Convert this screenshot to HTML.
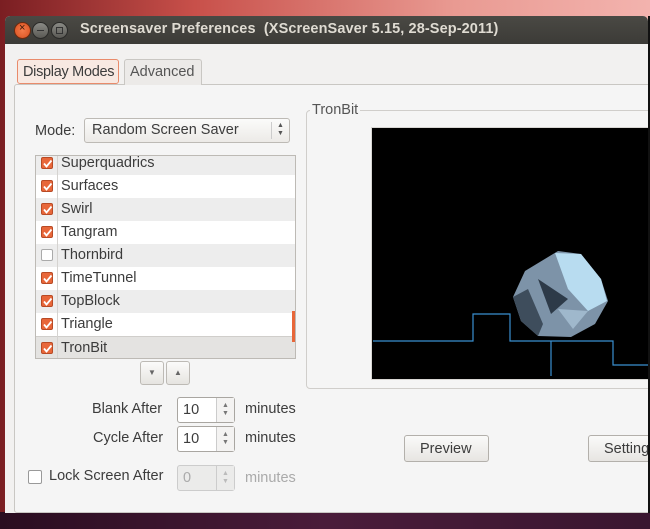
<!DOCTYPE html>
<html><head><style>
*{box-sizing:border-box;margin:0;padding:0}
body{width:650px;height:529px;overflow:hidden;position:relative;background:#000;font-family:"Liberation Sans","DejaVu Sans",sans-serif;font-size:14px;color:#3c3c3c}
.a{position:absolute;white-space:nowrap}
.desk{left:0;top:0;width:650px;height:529px;background:linear-gradient(90deg,#7a1e22 0%,#c8504a 30%,#e99a92 70%,#f3b3ae 100%)}
.bottom{left:0;top:512px;width:650px;height:17px;background:linear-gradient(90deg,#2a0d20,#4a1c3a 50%,#3a1630)}
.win{left:5px;top:16px;width:643px;height:497px;background:#f2f1f0;border-radius:5px 5px 0 0;overflow:hidden}
.tb{left:0;top:0;width:643px;height:28px;background:linear-gradient(#4a4944,#3c3b37)}
.btn{top:6px;width:17px;height:17px;border-radius:50%;background:linear-gradient(#8a8a85,#5a5954);border:1px solid #2a2a28}
.title{left:75px;top:5px;color:#dfdbd2;font-weight:bold;font-size:14.5px;letter-spacing:.1px}
.note{left:9px;top:68px;width:640px;height:429px;border:1px solid #c9c7c3;background:#f5f5f5;border-radius:3px}
.tab{top:43px;height:26px;border:1px solid #c9c7c3;border-bottom:none;border-radius:3px 3px 0 0;background:#eceae8;padding:4px 5px;font-size:14.5px}
.sel{border:1px solid #e98b6b;background:#f8e9e2;border-radius:3px}
.lbl{font-size:14.5px}
.combo{left:79px;top:102px;width:206px;height:25px;border:1px solid #bdbab5;border-radius:3px;background:linear-gradient(#fbfbfa,#eceae7);padding:3px 7px;font-size:14.5px}
.list{left:30px;top:139px;width:261px;height:204px;border:1px solid #bdbab5;background:#fff;overflow:hidden}
.row{position:absolute;left:0;width:259px;height:23px;font-size:14.5px}
.row span{position:absolute;left:25px;top:3px}
.cb{position:absolute;left:5px;top:5px;width:12px;height:12px;border-radius:2px;background:#e8673a;border:1px solid #b84a25}
.cb.off{background:#fff;border:1px solid #aaa}
.cb svg{position:absolute;left:0;top:0}
.sbtn{width:24px;height:24px;border:1px solid #bdbab5;border-radius:3px;background:linear-gradient(#fbfbfa,#e6e4e0)}
.spin{width:58px;height:26px;border:1px solid #a9a6a1;border-radius:3px;background:#fff;padding:4px 5px;font-size:14.5px}
.spin i{position:absolute;right:0;top:0;width:18px;height:24px;border-left:1px solid #ccc;background:#f4f3f2;font-style:normal;font-size:7px;line-height:8px;text-align:center;color:#777;padding-top:4px}
.frame{left:301px;top:94px;width:360px;height:279px;border:1px solid #d0cecb;border-radius:4px}
.pbtn{height:27px;border:1px solid #b3b0ab;border-radius:3px;background:linear-gradient(#fafaf9,#e7e5e2);padding:5px 15px;font-size:14.5px}
</style></head><body>
<div class="a desk"></div>
<div class="a bottom"></div>
<div class="a win">
 <div class="a tb">
  <div class="a btn" style="left:9px;background:radial-gradient(#f47b4a,#d8501f);border-color:#6a2a10"><span style="position:absolute;left:4px;top:-1px;font-size:11px;color:#3a1a0a">×</span></div>
  <div class="a btn" style="left:27px"><span style="position:absolute;left:4px;top:7px;width:7px;height:1px;background:#333"></span></div>
  <div class="a btn" style="left:46px"><span style="position:absolute;left:4px;top:4px;width:7px;height:7px;border:1px solid #333"></span></div>
  <div class="a title">Screensaver Preferences&nbsp; (XScreenSaver 5.15, 28-Sep-2011)</div>
 </div>
 <div class="a note"></div>
 <div class="a tab sel" style="left:12px;width:102px;height:25px;letter-spacing:-.3px">Display Modes</div>
 <div class="a tab" style="left:119px;width:78px;color:#555">Advanced</div>
 <div class="a lbl" style="left:30px;top:107px">Mode:</div>
 <div class="a combo">Random Screen Saver<span style="position:absolute;right:0;top:3px;width:18px;height:17px;border-left:1px solid #ccc;font-size:7px;line-height:8px;text-align:center;color:#555">▲<br>▼</span></div>
 <div class="a list">
  <div style="position:absolute;left:21px;top:0;width:1px;height:204px;background:#d5d3d0;z-index:2"></div>
  <div class="row" style="top:-4px;background:#ededed"><div class="cb"><svg width="12" height="12"><path d="M2 5.5 L4.5 8.5 L9.5 2.5" stroke="#fff" stroke-width="1.8" fill="none"/></svg></div><span>Superquadrics</span></div>
  <div class="row" style="top:19px"><div class="cb"><svg width="12" height="12"><path d="M2 5.5 L4.5 8.5 L9.5 2.5" stroke="#fff" stroke-width="1.8" fill="none"/></svg></div><span>Surfaces</span></div>
  <div class="row" style="top:42px;background:#ededed"><div class="cb"><svg width="12" height="12"><path d="M2 5.5 L4.5 8.5 L9.5 2.5" stroke="#fff" stroke-width="1.8" fill="none"/></svg></div><span>Swirl</span></div>
  <div class="row" style="top:65px"><div class="cb"><svg width="12" height="12"><path d="M2 5.5 L4.5 8.5 L9.5 2.5" stroke="#fff" stroke-width="1.8" fill="none"/></svg></div><span>Tangram</span></div>
  <div class="row" style="top:88px;background:#ededed"><div class="cb off"></div><span>Thornbird</span></div>
  <div class="row" style="top:111px"><div class="cb"><svg width="12" height="12"><path d="M2 5.5 L4.5 8.5 L9.5 2.5" stroke="#fff" stroke-width="1.8" fill="none"/></svg></div><span>TimeTunnel</span></div>
  <div class="row" style="top:134px;background:#ededed"><div class="cb"><svg width="12" height="12"><path d="M2 5.5 L4.5 8.5 L9.5 2.5" stroke="#fff" stroke-width="1.8" fill="none"/></svg></div><span>TopBlock</span></div>
  <div class="row" style="top:157px"><div class="cb"><svg width="12" height="12"><path d="M2 5.5 L4.5 8.5 L9.5 2.5" stroke="#fff" stroke-width="1.8" fill="none"/></svg></div><span>Triangle</span></div>
  <div class="row" style="top:180px;background:#e4e3e1;border-top:1px solid #d0cecb"><div class="cb"><svg width="12" height="12"><path d="M2 5.5 L4.5 8.5 L9.5 2.5" stroke="#fff" stroke-width="1.8" fill="none"/></svg></div><span>TronBit</span></div>
  <div style="position:absolute;left:256px;top:155px;width:3px;height:31px;background:#e8673a"></div>
 </div>
 <div class="a sbtn" style="left:135px;top:345px;font-size:8px;text-align:center;line-height:22px;color:#666">▼</div>
 <div class="a sbtn" style="left:161px;top:345px;font-size:8px;text-align:center;line-height:22px;color:#666">▲</div>
 <div class="a lbl" style="left:87px;top:385px">Blank After</div>
 <div class="a spin" style="left:172px;top:381px">10<i>▲<br>▼</i></div>
 <div class="a lbl" style="left:240px;top:385px">minutes</div>
 <div class="a lbl" style="left:88px;top:414px">Cycle After</div>
 <div class="a spin" style="left:172px;top:410px">10<i>▲<br>▼</i></div>
 <div class="a lbl" style="left:240px;top:414px">minutes</div>
 <div class="a" style="left:23px;top:454px;width:14px;height:14px;border:1px solid #999;border-radius:2px;background:#fff"></div>
 <div class="a lbl" style="left:44px;top:452px">Lock Screen After</div>
 <div class="a spin" style="left:172px;top:449px;background:#ebebea;border-color:#ccc;color:#aaa">0<i style="background:#ebebea;color:#bbb">▲<br>▼</i></div>
 <div class="a lbl" style="left:240px;top:454px;color:#aaa">minutes</div>
 <div class="a frame"></div>
 <div class="a lbl" style="left:305px;top:86px;background:#f5f5f5;padding:0 2px;color:#555">TronBit</div>
 <div class="a" style="left:366px;top:111px;width:290px;height:253px;border:1px solid #d8d6d3;background:#000">
  <svg width="290" height="253" style="position:absolute;left:1px;top:1px">
   <polyline fill="none" stroke="#3a8fd0" stroke-width="1.2" points="0,212 100,212 100,185 137,185 137,212 178,212 178,247 178,212 240,212 240,236 278,236 278,206 290,212"/>
   <polygon points="140,168 152,142 185,122 208,125 228,150 235,172 222,195 198,208 165,207 148,192" fill="#7d93a8"/>
   <polygon points="182,124 208,125 228,150 234,172 215,182 195,160" fill="#b8dcf0"/>
   <polygon points="140,168 155,160 170,195 165,207 148,192" fill="#3e4d5c"/>
   <polygon points="165,150 195,170 178,185" fill="#2d3a48"/>
   <polygon points="185,180 215,182 200,200" fill="#9fb8cc"/>
  </svg>
 </div>
 <div class="a pbtn" style="left:399px;top:419px;width:85px">Preview</div>
 <div class="a pbtn" style="left:583px;top:419px;width:80px">Settings...</div>
</div>
<div class="a" style="left:648px;top:16px;width:2px;height:497px;background:#111"></div>
</body></html>
